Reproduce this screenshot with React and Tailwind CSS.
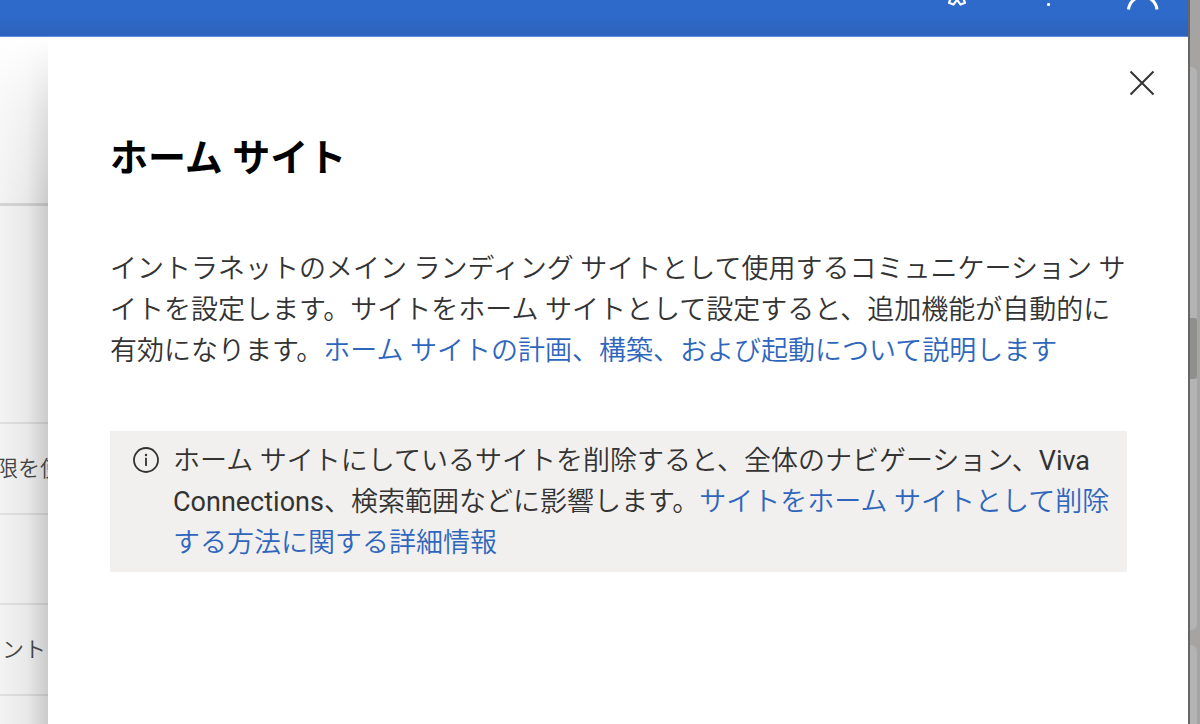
const linkClass = "text-[#2f66bd] hover:underline";

function Header() {
  return (
    <header className="flex h-[37px] shrink-0 items-start justify-end gap-16 overflow-hidden border-b border-[#5f8fd8] bg-linear-to-b from-[#2e6aca] from-40% to-[#2c62bb] pr-7 text-white">
      <button type="button" aria-label="設定" className="h-[10px] w-[36px]">
        <svg viewBox="0 0 36 10" className="block h-[10px] w-[36px]" fill="none" stroke="currentColor" strokeWidth="2.2">
          <path d="M10.500 -1L9 2.800L13.400 4.600L17 -0.200L20.600 4.600L25 2.800L23.500 -1" strokeLinejoin="round" />
        </svg>
      </button>
      <button type="button" aria-label="ヘルプ" className="h-[10px] w-[20px]">
        <svg viewBox="0 0 20 10" className="block h-[10px] w-[20px]" fill="currentColor">
          <rect x="7" y="3" width="3" height="3" rx="1" />
        </svg>
      </button>
      <button type="button" aria-label="アカウント" className="h-[10px] w-[36px]">
        <svg viewBox="0 0 36 10" className="block h-[10px] w-[36px]" fill="none" stroke="currentColor" strokeWidth="3">
          <path d="M4.500 9.500C5 5 7.500 1 11.500 -1.500M33 9.500C32.500 5 30 1 26 -1.500" />
        </svg>
      </button>
    </header>
  );
}

function BackgroundList() {
  return (
    <div className="flex w-12 shrink-0 flex-col overflow-hidden bg-linear-to-r from-[#f3f3f3] via-[#e9e9e9] via-55% to-[#cbcbcb] text-[22px] whitespace-nowrap text-[#444]">
      <div className="h-[169px] shrink-0 border-b-3 border-black/12 bg-linear-to-b from-white via-white/40 via-45% to-transparent bg-clip-padding" />
      <div className="h-[218px] shrink-0 border-b-2 border-black/8" />
      <div className="flex h-[91px] shrink-0 items-center justify-end border-b-2 border-black/8">
        <span className="-mr-[14px]">限を使</span>
      </div>
      <div className="h-[90px] shrink-0 border-b-2 border-black/8" />
      <div className="flex h-[91px] shrink-0 items-center justify-end border-b-2 border-black/8 pr-[2px]">
        <span>ント</span>
      </div>
      <div className="grow" />
    </div>
  );
}

function HomeSitePanel() {
  return (
    <section aria-labelledby="panel-title" className="min-w-0 grow bg-white pr-[61px] pl-[62px] text-[27px] leading-[41px] text-[#333]">
      <div className="-mr-8 flex justify-end pt-[29px]">
        <button type="button" aria-label="閉じる" className="p-1">
          <svg viewBox="0 0 26 26" className="block size-[26px]" fill="none" stroke="currentColor" strokeWidth="2">
            <path d="M1.500 1.500L24.500 24.500M24.500 1.500L1.500 24.500" />
          </svg>
        </button>
      </div>
      <h1 id="panel-title" className="mt-[30px] text-[38px] leading-[56px] font-bold text-black">ホーム サイト</h1>
      <p className="mt-[63px] whitespace-nowrap">
        イントラネットのメイン ランディング サイトとして使用するコミュニケーション サ<br />
        イトを設定します。サイトをホーム サイトとして設定すると、追加機能が自動的に<br />
        有効になります。<a href="#plan" className={linkClass}>ホーム サイトの計画、構築、および起動について説明します</a>
      </p>
      <div className="mt-[59px] flex bg-[#f1f0ee] pt-[10px] pb-2 pl-[22px]">
        <svg viewBox="0 0 28 28" className="mt-[5px] mr-[13px] block size-[28px] shrink-0" fill="none" stroke="currentColor" strokeWidth="1.800" aria-hidden="true">
          <circle cx="14" cy="14" r="12" />
          <path d="M14 11.700V20" />
          <circle cx="14" cy="9" r="1.200" fill="currentColor" stroke="none" />
        </svg>
        <p className="whitespace-nowrap">
          ホーム サイトにしているサイトを削除すると、全体のナビゲーション、<span className="font-normal">Viva</span><br />
          <span className="font-normal">Connections</span>、検索範囲などに影響します。<a href="#remove" className={linkClass}>サイトをホーム サイトとして削除<br />
          する方法に関する詳細情報</a>
        </p>
      </div>
    </section>
  );
}

function WindowEdge() {
  return (
    <div aria-hidden="true" className="flex w-3 shrink-0 flex-col border-l-2 border-[#666] bg-[#a5a4a2] pr-[3px]">
      <div className="h-[67px]" />
      <div className="h-[251px] rounded-tr-md bg-[#b3b3b3]" />
      <div className="h-[61px] rounded-r-sm bg-[#8f8f8e]" />
      <div className="h-[251px] rounded-br-md bg-[#b3b3b3]" />
      <div className="mt-[15px] grow rounded-tr-md bg-[#b3b3b3]" />
    </div>
  );
}

export default function App() {
  return (
    <div lang="ja" className="flex min-h-screen overflow-hidden font-['Roboto','Noto_Sans_CJK_JP',sans-serif] font-[350]">
      <div className="flex min-w-0 grow flex-col">
        <Header />
        <main className="flex grow">
          <BackgroundList />
          <HomeSitePanel />
        </main>
      </div>
      <WindowEdge />
    </div>
  );
}
